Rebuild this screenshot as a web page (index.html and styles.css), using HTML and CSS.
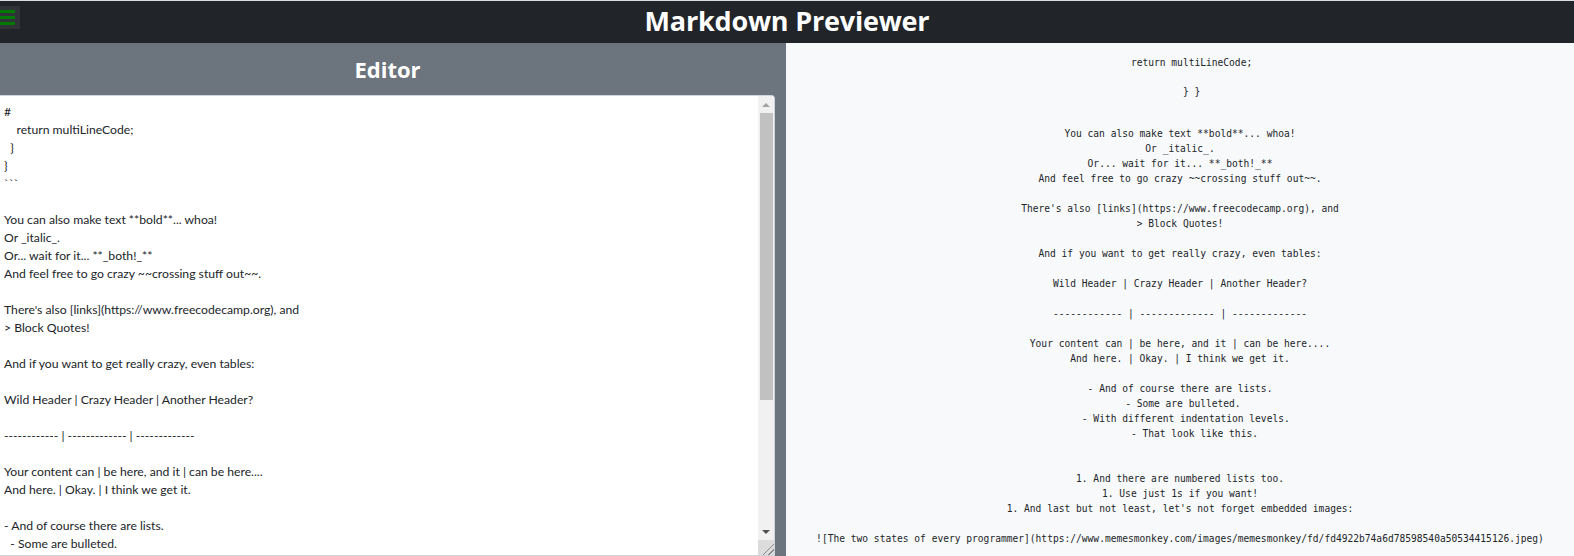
FILE: index.html
```html
<!DOCTYPE html>
<html lang="en">
<head>
<meta charset="utf-8">
<title>Markdown Previewer</title>
<link rel="stylesheet" href="styles.css">
</head>
<body>
<header class="topbar">
  <div class="topbar-left">
    <button class="menu-btn" aria-label="menu"><span></span><span></span><span></span></button>
  </div>
  <h1 class="app-title">Markdown Previewer</h1>
  <div class="topbar-right"></div>
</header>
<main class="panes">
  <section class="editor-pane">
    <div class="editor-inner">
      <h2 class="pane-title">Editor</h2>
      <div class="editor-box">
        <textarea class="editor" spellcheck="false">#
    return multiLineCode;
  }
}
&#96;&#96;&#96;

You can also make text **bold**... whoa!
Or _italic_.
Or... wait for it... **_both!_**
And feel free to go crazy ~~crossing stuff out~~.

There's also [links](https://www.freecodecamp.org), and
&gt; Block Quotes!

And if you want to get really crazy, even tables:

Wild Header | Crazy Header | Another Header?

------------ | ------------- | -------------

Your content can | be here, and it | can be here....
And here. | Okay. | I think we get it.

- And of course there are lists.
  - Some are bulleted.
     - With different indentation levels.
        - That look like this.


1. And there are numbered lists too.
1. Use just 1s if you want!
1. And last but not least, let's not forget embedded images:

![The two states of every programmer](https://www.memesmonkey.com/images/memesmonkey/fd/fd4922b74a6d78598540a50534415126.jpeg)
</textarea>
        <div class="vscroll" aria-hidden="true">
          <div class="vs-btn vs-up"></div>
          <div class="vs-track"><div class="vs-thumb"></div></div>
          <div class="vs-btn vs-down"></div>
          <div class="vs-corner"></div>
        </div>
      </div>
    </div>
  </section>
  <section class="preview-pane">
    <div class="preview">
      <p class="pv pv-1">    return multiLineCode;</p>
      <p class="pv pv-2">    } }</p>
      <p class="pv pv-3">You can also make text **bold**... whoa!
Or _italic_.
Or... wait for it... **_both!_**
And feel free to go crazy ~~crossing stuff out~~.</p>
      <p class="pv">There's also [links](https://www.freecodecamp.org), and
&gt; Block Quotes!</p>
      <p class="pv">And if you want to get really crazy, even tables:</p>
      <p class="pv">Wild Header | Crazy Header | Another Header?</p>
      <p class="pv">------------ | ------------- | -------------</p>
      <p class="pv">Your content can | be here, and it | can be here....
And here. | Okay. | I think we get it.</p>
      <p class="pv">- And of course there are lists.
 - Some are bulleted.
  - With different indentation levels.
     - That look like this.</p>
      <p class="pv pv-gap">1. And there are numbered lists too.
1. Use just 1s if you want!
1. And last but not least, let's not forget embedded images:</p>
      <p class="pv">![The two states of every programmer](https://www.memesmonkey.com/images/memesmonkey/fd/fd4922b74a6d78598540a50534415126.jpeg)</p>
    </div>
  </section>
</main>
</body>
</html>
```

FILE: styles.css
```css
html, body {
  margin: 0;
  padding: 0;
  height: 100%;
  overflow: hidden;
}

body {
  font-family: "Open Sans", "Noto Sans", "Liberation Sans", sans-serif;
  color: #212529;
  background: #f8f9fa;
  border-top: 1px solid #dadce0;
  box-sizing: border-box;
}

.topbar {
  display: grid;
  grid-template-columns: 1fr auto 1fr;
  align-items: start;
  height: 42px;
  background: #212529;
}

.topbar-left {
  padding-top: 5px;
}

.menu-btn {
  display: flex;
  flex-direction: column;
  gap: 3px;
  width: 20px;
  height: 23px;
  padding: 4px 5px 0 0;
  margin: 0;
  border: 0;
  background: #303439;
  box-sizing: border-box;
}

.menu-btn span {
  display: block;
  width: 15px;
  height: 3px;
  background: #007a00;
}

.app-title {
  margin: 0;
  color: #fff;
  font-size: 27px;
  font-weight: 700;
  line-height: 40px;
  letter-spacing: -0.2px;
}

.panes {
  display: grid;
  grid-template-columns: 786px 1fr;
  height: calc(100% - 42px);
}

.editor-pane {
  background: #6c757d;
  overflow: hidden;
}

.editor-inner {
  width: 775px;
  display: flex;
  flex-direction: column;
}

.pane-title {
  margin: 0;
  height: 52px;
  line-height: 52px;
  text-align: center;
  color: #fff;
  font-size: 22px;
  font-weight: 700;
}

.editor-box {
  display: flex;
  box-sizing: border-box;
  width: 775px;
  height: 461px;
  border: 1px solid #ced4da;
  border-left: 0;
  border-radius: 0 4px 0 0;
  background: #fff;
  overflow: hidden;
}

.editor {
  display: block;
  flex: 1;
  box-sizing: border-box;
  margin: 0;
  padding: 7px 4px 0;
  border: 0;
  background: #fff;
  color: #212529;
  font-family: "Lato", "Open Sans", "Liberation Sans", sans-serif;
  font-size: 12.2px;
  line-height: 18px;
  outline: none;
  resize: none;
  overflow: hidden;
  white-space: pre-wrap;
}

.vscroll {
  display: flex;
  flex-direction: column;
  width: 16px;
  flex: none;
  background: #f1f1f1;
}

.vs-btn {
  display: flex;
  align-items: center;
  justify-content: center;
  height: 17px;
  flex: none;
}

.vs-up::before,
.vs-down::before {
  content: "";
  width: 0;
  height: 0;
  border-left: 4px solid transparent;
  border-right: 4px solid transparent;
}

.vs-up::before {
  border-bottom: 4px solid #a3a3a3;
}

.vs-down::before {
  border-top: 4px solid #505050;
}

.vs-track {
  flex: 1;
  padding: 0 1px 0 2px;
}

.vs-thumb {
  height: 287px;
  background: #c1c1c1;
}

.vs-corner {
  height: 15px;
  flex: none;
  background:
    linear-gradient(135deg, transparent 62%, #8a8a8a 62%, #8a8a8a 67%, transparent 67%, transparent 80%, #8a8a8a 80%, #8a8a8a 85%, transparent 85%),
    #dcdcdc;
}

.preview-pane {
  background: #f8f9fa;
  overflow: hidden;
}

.preview {
  padding-top: 12px;
  text-align: center;
  font-family: "DejaVu Sans Mono", "Liberation Mono", monospace;
  font-size: 9.6px;
  line-height: 15px;
  color: #212529;
}

.pv {
  margin: 15px 0 0;
  white-space: pre-wrap;
}

.pv-1 {
  margin-top: 0;
}

.pv-2 {
  margin-top: 14px;
}

.pv-3 {
  margin-top: 27px;
}

.pv-gap {
  margin-top: 30px;
}
```
